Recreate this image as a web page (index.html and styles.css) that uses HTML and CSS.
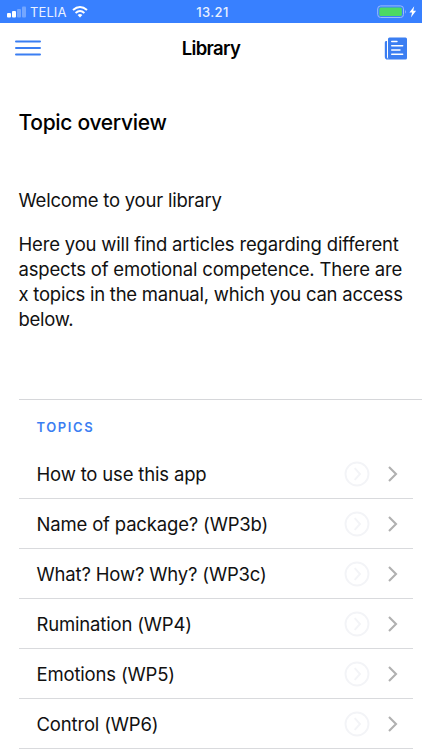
FILE: index.html
```html
<!DOCTYPE html>
<html lang="en">
<head>
<meta charset="utf-8">
<title>Library</title>
<link rel="stylesheet" href="styles.css">
</head>
<body>
<svg class="defs" width="0" height="0" aria-hidden="true">
  <symbol id="more" viewBox="0 0 26 26"><circle cx="13" cy="13" r="11.5"/><path d="M10.7 7.2l5.3 5.8-5.3 5.8"/></symbol>
  <symbol id="chevron" viewBox="0 0 10 16"><path d="M1 1l7 7-7 7"/></symbol>
</svg>
<div class="status">
  <div class="carrier">
    <svg class="signal" width="19" height="12" viewBox="0 0 19 12" fill="#fff"><rect x="0" y="7" width="4" height="4.5" rx="1"/><rect x="5" y="5" width="4" height="6.5" rx="1"/><rect x="10" y="3" width="4" height="8.5" rx="1" opacity=".3"/><rect x="15" y=".5" width="4" height="11" rx="1" opacity=".3"/></svg>
    <span class="telia">TELIA</span>
    <svg class="wifi" width="16" height="12" viewBox="0 0 16 12"><path d="M1 4.1Q8-2 15 4.1M3.6 6.9Q8 3.1 12.4 6.9" fill="none" stroke="#fff" stroke-width="2"/><path d="M5.6 9Q8 7.1 10.4 9L8 11.6z" fill="#fff"/></svg>
  </div>
  <span class="time">13.21</span>
  <div class="power">
    <svg width="40" height="14" viewBox="0 0 40 14"><rect x=".7" y=".9" width="25.8" height="11.6" rx="3" fill="none" stroke="#9bbcfb"/><rect x="2.3" y="2.5" width="22.6" height="8.4" rx="1.5" fill="#4cd964"/><path d="M28 4.7q1.6 2 0 4z" fill="#9bbcfb"/><path d="M37.2 1.2l-4.8 6.3h2.7l-1.2 5.1 5.2-6.8h-2.8z" fill="#fff"/></svg>
  </div>
</div>
<header class="navbar">
  <svg class="menu" width="26" height="18" viewBox="0 0 26 18" stroke="#3b7ef2" stroke-width="2" stroke-linecap="round"><path d="M1 2.5h24M1 9h24M1 15.5h24"/></svg>
  <h1 class="title">Library</h1>
  <svg class="news" width="23" height="23" viewBox="0 0 23 23"><rect x="4" y=".5" width="19" height="22" rx="1.5" fill="#3b7ef2"/><path d="M3 4H2Q.8 4 .8 5.5v14.2q0 2.8 2.8 2.8H6Q3 22 3 19.5z" fill="#3b7ef2"/><path d="M7.7 4.5h5.3M7.7 8.8h11M7.7 13h8.3M7.7 17.3h11" stroke="#fff" stroke-width="1.4" stroke-linecap="round"/></svg>
</header>
<main class="content">
  <h2 class="heading">Topic overview</h2>
  <p class="welcome">Welcome to your library</p>
  <p class="intro"><span class="l1">Here you will find articles regarding different</span><br><span class="l2">aspects of emotional competence. There are</span><br><span class="l3">x topics in the manual, which you can access</span><br><span class="l4">below.</span></p>
  <section class="topics">
    <h3 class="label">TOPICS</h3>
    <ul class="list">
      <li class="row"><span class="name">How to use this app</span><svg class="more"><use href="#more"/></svg><svg class="chevron"><use href="#chevron"/></svg></li>
      <li class="row"><span class="name">Name of package? (WP3b)</span><svg class="more"><use href="#more"/></svg><svg class="chevron"><use href="#chevron"/></svg></li>
      <li class="row"><span class="name">What? How? Why? (WP3c)</span><svg class="more"><use href="#more"/></svg><svg class="chevron"><use href="#chevron"/></svg></li>
      <li class="row"><span class="name">Rumination (WP4)</span><svg class="more"><use href="#more"/></svg><svg class="chevron"><use href="#chevron"/></svg></li>
      <li class="row"><span class="name">Emotions (WP5)</span><svg class="more"><use href="#more"/></svg><svg class="chevron"><use href="#chevron"/></svg></li>
      <li class="row"><span class="name">Control (WP6)</span><svg class="more"><use href="#more"/></svg><svg class="chevron"><use href="#chevron"/></svg></li>
    </ul>
  </section>
</main>
</body>
</html>
```
FILE: styles.css
```css
* { box-sizing: border-box; }
body { margin: 0; height: 750px; overflow: hidden; background: #fff; color: #111; font-family: Inter, "Liberation Sans", sans-serif; font-size: 18.5px; }
h1, h2, h3, p, ul { margin: 0; padding: 0; font-weight: 400; }
svg { display: block; flex: none; }
.defs { position: absolute; }
.status { height: 23px; background: #3880ff; color: #eaf1ff; display: grid; grid-template-columns: 1fr auto 1fr; align-items: center; padding: 0 5px 0 7px; font-size: 13px; line-height: 22px; }
.carrier { display: flex; align-items: center; }
.signal { margin: 0 4px 0 0; }
.telia { width: 36px; letter-spacing: 0.1px; }
.wifi { margin-left: 6px; }
.time { font-weight: 500; letter-spacing: 0.4px; padding-left: 1px; }
.power { display: flex; justify-content: flex-end; }
.navbar { height: 50px; display: grid; grid-template-columns: 1fr auto 1fr; align-items: center; padding: 0 15px; }
.title { font-size: 18.5px; font-weight: 600; line-height: 24px; letter-spacing: -0.7px; color: #000; }
.news { justify-self: end; }
.content { padding-left: 18.5px; }
.heading { margin-top: 36px; font-size: 21px; font-weight: 500; line-height: 28px; letter-spacing: -0.3px; color: #000; }
.welcome { margin-top: 51px; line-height: 25px; letter-spacing: -0.21px; }
.intro { margin-top: 19.4px; line-height: 24.7px; white-space: nowrap; letter-spacing: -0.18px; }
.l3 { letter-spacing: -0.24px; }
.l4 { letter-spacing: -0.3px; }
.topics { margin-top: 67.6px; border-top: 1px solid #d6d7da; }
.label { padding: 18px 0 0 18px; height: 49px; font-size: 13px; font-weight: 600; line-height: 18px; letter-spacing: 1.6px; color: #3b7ef2; }
.list { list-style: none; margin-right: 9px; }
.row { height: 50px; padding: 1px 15.5px 0 18px; border-bottom: 1px solid #d9dadd; display: flex; align-items: center; }
.name { flex: 1; white-space: nowrap; line-height: 25px; padding-top: 1px; letter-spacing: -0.17px; }
.more { width: 26px; height: 26px; fill: none; stroke: #f3f4f7; stroke-width: 1.9; margin-right: 17.5px; }
.chevron { width: 10px; height: 16px; fill: none; stroke: #b0b0b0; stroke-width: 2.1; }
```
